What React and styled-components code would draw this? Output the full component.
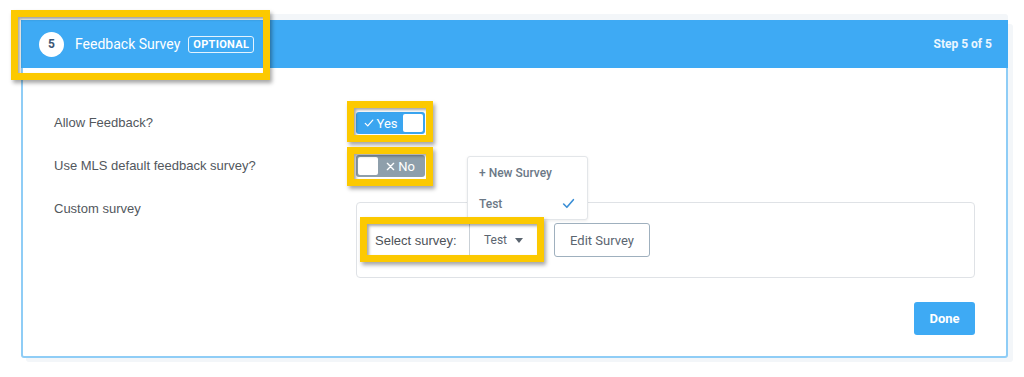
import React from 'react';
import styled, { createGlobalStyle } from 'styled-components';

const GlobalStyle = createGlobalStyle`
  body {
    margin: 0;
    background: #fff;
    font-family: "Liberation Sans", Arial, sans-serif;
  }
`;

const Page = styled.div`
  padding: 20px 16px 20px 21px;
`;

const Card = styled.section`
  width: 987px;
  box-sizing: border-box;
  border: 2px solid #8fcdf6;
  border-radius: 3px;
  background: #fff;
  box-shadow: 0 -6px 0 0 #f3f6f9, 5px 4px 0 0 #f3f6f9;
`;

const Header = styled.header`
  position: relative;
  display: flex;
  align-items: center;
  height: 48px;
  margin: -2px -2px 0;
  padding: 0 16px 0 18px;
  background: #3eaaf4;
  color: #fff;
  font-family: Roboto, "Liberation Sans", sans-serif;
`;

const StepNumber = styled.span`
  display: flex;
  align-items: center;
  justify-content: center;
  width: 25px;
  height: 25px;
  border-radius: 50%;
  background: #fff;
  color: #3b5675;
  font-size: 12px;
  font-weight: 700;
`;

const Title = styled.h2`
  margin: 0 0 0 11px;
  font-size: 14px;
  font-weight: 400;
`;

const Badge = styled.span`
  margin-left: 8px;
  padding: 1px 4px;
  border: 1px solid #e4f3fe;
  border-radius: 3px;
  font-size: 11px;
  font-weight: 700;
  letter-spacing: 0.3px;
  line-height: 13px;
`;

const StepCount = styled.span`
  margin-left: auto;
  font-size: 12px;
  font-weight: 700;
  color: #eaf6ff;
`;

const Highlight = styled.span`
  position: absolute;
  top: ${p => p.$t}px;
  left: ${p => p.$l}px;
  right: ${p => p.$r}px;
  bottom: ${p => p.$b}px;
  border: 7px solid #fcc900;
  box-shadow: 2px 3px 4px rgba(0, 0, 0, 0.35), inset 2px 2px 3px rgba(0, 0, 0, 0.35);
  pointer-events: none;
`;

const HeaderHighlight = styled(Highlight)`
  right: auto;
  width: 259px;
  box-sizing: border-box;
`;

const Body = styled.div`
  display: grid;
  grid-template-columns: 302px 1fr;
  padding: 44px 31px 21px 31px;
`;

const Label = styled.div`
  font-size: 13px;
  color: #52575d;
  line-height: ${p => p.$lh || 22}px;
  margin-top: ${p => p.$mt || 0}px;
`;

const Control = styled.div`
  margin-top: ${p => p.$mt || 0}px;
`;

const Marked = styled.div`
  position: relative;
  display: inline-flex;
`;

const Toggle = styled.div`
  display: flex;
  align-items: center;
  flex-direction: ${p => (p.$on ? 'row' : 'row-reverse')};
  width: 69px;
  height: 22px;
  box-sizing: border-box;
  padding: 2px;
  border-radius: 3px;
  background: ${p => (p.$on ? '#3aa5f0' : '#8e9fab')};
  color: #fff;
  font-family: Roboto, "Liberation Sans", sans-serif;
  font-size: 13px;
`;

const ToggleText = styled.span`
  flex: 1;
  display: flex;
  align-items: center;
  justify-content: center;
  gap: 3px;
`;

const Knob = styled.span`
  width: 20px;
  height: 18px;
  border-radius: 2px;
  background: #fff;
`;

const SurveyBox = styled.div`
  display: flex;
  align-items: center;
  gap: 17px;
  height: 76px;
  box-sizing: border-box;
  padding: 0 10px;
  border: 1px solid #dfe2e6;
  border-radius: 4px;
`;

const SelectGroup = styled.div`
  position: relative;
  display: flex;
  align-items: stretch;
  height: 32px;
  font-size: 13px;
  color: #4d5258;
`;

const SelectLabel = styled.span`
  display: flex;
  align-items: center;
  padding: 0 8px;
  width: 86px;
  border-right: 1px solid #c9d0d6;
`;

const SelectButton = styled.span`
  position: relative;
  display: flex;
  align-items: center;
  justify-content: center;
  gap: 8px;
  width: 67px;
  color: #5b6570;
  font-family: Roboto, "Liberation Sans", sans-serif;
  font-size: 12px;
`;

const Caret = styled.span`
  width: 0;
  height: 0;
  border-left: 4.5px solid transparent;
  border-right: 4.5px solid transparent;
  border-top: 5px solid #5b6570;
`;

const Menu = styled.ul`
  position: absolute;
  left: -3px;
  bottom: calc(100% + 4px);
  width: 119px;
  margin: 0;
  padding: 0;
  list-style: none;
  background: #fff;
  border: 1px solid #e3e6e9;
  border-radius: 3px;
  box-shadow: 0 1px 3px rgba(0, 0, 0, 0.08);
  font-family: Roboto, "Liberation Sans", sans-serif;
  font-size: 12px;
  font-weight: 500;
  color: #6b7886;
`;

const MenuItem = styled.li`
  display: flex;
  align-items: center;
  justify-content: space-between;
  height: 31px;
  padding: 0 12px 0 11px;
`;

const OutlineButton = styled.button`
  width: 96px;
  height: 34px;
  border: 1px solid #9fb0be;
  border-radius: 3px;
  background: #fff;
  color: #5b6570;
  font-family: Roboto, "Liberation Sans", sans-serif;
  font-size: 13px;
`;

const Footer = styled.div`
  grid-column: 1 / -1;
  display: flex;
  justify-content: flex-end;
  margin-top: 24px;
`;

const PrimaryButton = styled.button`
  width: 61px;
  height: 33px;
  border: none;
  border-radius: 3px;
  background: #3eaaf4;
  color: #fff;
  font-family: Roboto, "Liberation Sans", sans-serif;
  font-size: 13px;
  font-weight: 700;
`;

const Check = ({ size = 10, color = '#fff' }) => (
  <svg width={size} height={size} viewBox="0 0 12 12" fill="none">
    <path d="M1.5 6.5 L4.5 9.5 L10.5 2.5" stroke={color} strokeWidth="1.5" strokeLinecap="round" strokeLinejoin="round" />
  </svg>
);

const Cross = () => (
  <svg width="9" height="9" viewBox="0 0 10 10" fill="none">
    <path d="M1.5 1.5 L8.5 8.5 M8.5 1.5 L1.5 8.5" stroke="#fff" strokeWidth="1.5" strokeLinecap="round" />
  </svg>
);

export default function App() {
  return (
    <>
      <GlobalStyle />
      <Page>
        <Card>
          <Header>
            <HeaderHighlight $t={-10} $l={-10} $b={-12} />
            <StepNumber>5</StepNumber>
            <Title>Feedback Survey</Title>
            <Badge>OPTIONAL</Badge>
            <StepCount>Step 5 of 5</StepCount>
          </Header>
          <Body>
            <Label>Allow Feedback?</Label>
            <Control>
              <Marked>
                <Toggle $on>
                  <ToggleText><Check /> Yes</ToggleText>
                  <Knob />
                </Toggle>
                <Highlight $t={-11} $l={-9} $r={-8} $b={-8} />
              </Marked>
            </Control>

            <Label $mt={21}>Use MLS default feedback survey?</Label>
            <Control $mt={21}>
              <Marked>
                <Toggle>
                  <ToggleText><Cross /> No</ToggleText>
                  <Knob />
                </Toggle>
                <Highlight $t={-8} $l={-9} $r={-8} $b={-9} />
              </Marked>
            </Control>

            <Label $mt={23} $lh={14}>Custom survey</Label>
            <Control $mt={23}>
              <SurveyBox>
                <SelectGroup>
                  <SelectLabel>Select survey:</SelectLabel>
                  <SelectButton>
                    Test <Caret />
                    <Menu>
                      <MenuItem>+ New Survey</MenuItem>
                      <MenuItem>Test <Check size={13} color="#3b8fd6" /></MenuItem>
                    </Menu>
                  </SelectButton>
                  <Highlight $t={-7} $l={-7} $r={-7} $b={-6} />
                </SelectGroup>
                <OutlineButton>Edit Survey</OutlineButton>
              </SurveyBox>
            </Control>

            <Footer>
              <PrimaryButton>Done</PrimaryButton>
            </Footer>
          </Body>
        </Card>
      </Page>
    </>
  );
}
